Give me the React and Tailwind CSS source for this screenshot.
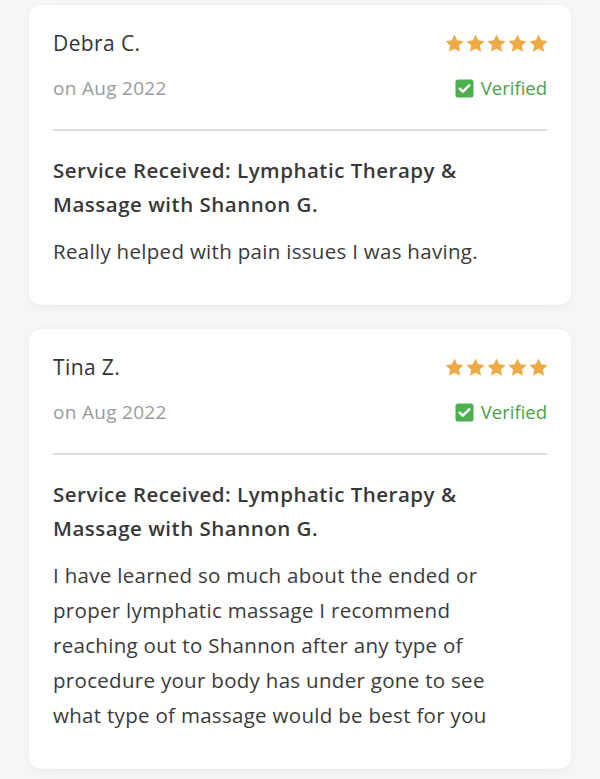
import React from 'react';

const reviews = [
    {
        id: 1,
        name: 'Debra C.',
        date: 'on Aug 2022',
        service: 'Service Received: Lymphatic Therapy & Massage with Shannon G.',
        body: 'Really helped with pain issues I was having.',
    },
    {
        id: 2,
        name: 'Tina Z.',
        date: 'on Aug 2022',
        service: 'Service Received: Lymphatic Therapy & Massage with Shannon G.',
        body: 'I have learned so much about the ended or proper lymphatic massage I recommend reaching out to Shannon after any type of procedure your body has under gone to see what type of massage would be best for you',
    },
];

const Star = () => (
    <svg viewBox="0 0 24 24" className="w-[21px] h-[21px]" fill="#eeaa45">
        <path d="M12 1.8l3.1 6.6 7.2.9-5.3 5 1.4 7.1L12 17.9l-6.4 3.5 1.4-7.1-5.3-5 7.2-.9z" />
    </svg>
);

const Check = () => (
    <svg viewBox="0 0 20 20" className="w-[19px] h-[19px]">
        <rect x="0.5" y="0.5" width="19" height="19" rx="3" fill="#4caf50" />
        <path d="M5 10.2l3.2 3.1L15 6.6" stroke="#fff" strokeWidth="2.6" fill="none" strokeLinecap="round" strokeLinejoin="round" />
    </svg>
);

const ReviewCard = ({ review }) => (
    <div className="bg-white rounded-[12px] shadow-[0_2px_12px_rgba(0,0,0,0.06)] px-6 pt-[25px] pb-[36px]">
        <div className="flex items-center justify-between h-[28px]">
            <span className="text-[21px] text-[#333] tracking-[0.4px]">{review.name}</span>
            <div className="flex mr-[-2px] mt-[-2px]">
                {[0, 1, 2, 3, 4].map(i => <Star key={i} />)}
            </div>
        </div>
        <div className="flex items-center justify-between h-[28px] mt-[16px]">
            <span className="text-[19px] text-[#9b9b9b] tracking-[0.3px]">{review.date}</span>
            <div className="flex items-center gap-[7px]">
                <Check />
                <span className="text-[18.5px] text-[#4e9f4b]">Verified</span>
            </div>
        </div>
        <div className="h-[2px] bg-[#dcdde4] mt-[27px]" />
        <p className="text-[20.5px] leading-[34px] text-[#383838] font-semibold mt-[22px] pr-[60px] tracking-[0.5px]">{review.service}</p>
        <p className="text-[20.5px] leading-[35px] text-[#3a3a3a] mt-[13px] pr-[40px] tracking-[0.3px]">{review.body}</p>
    </div>
);

const App = () => {
    return (
        <div className="min-h-[779px] bg-[#f6f7f8] px-[29px] pt-[5px] pb-6" style={{ fontFamily: '"Open Sans", sans-serif' }}>
            <div className="space-y-6">
                {reviews.map(r => <ReviewCard key={r.id} review={r} />)}
            </div>
        </div>
    );
};

export default App;
